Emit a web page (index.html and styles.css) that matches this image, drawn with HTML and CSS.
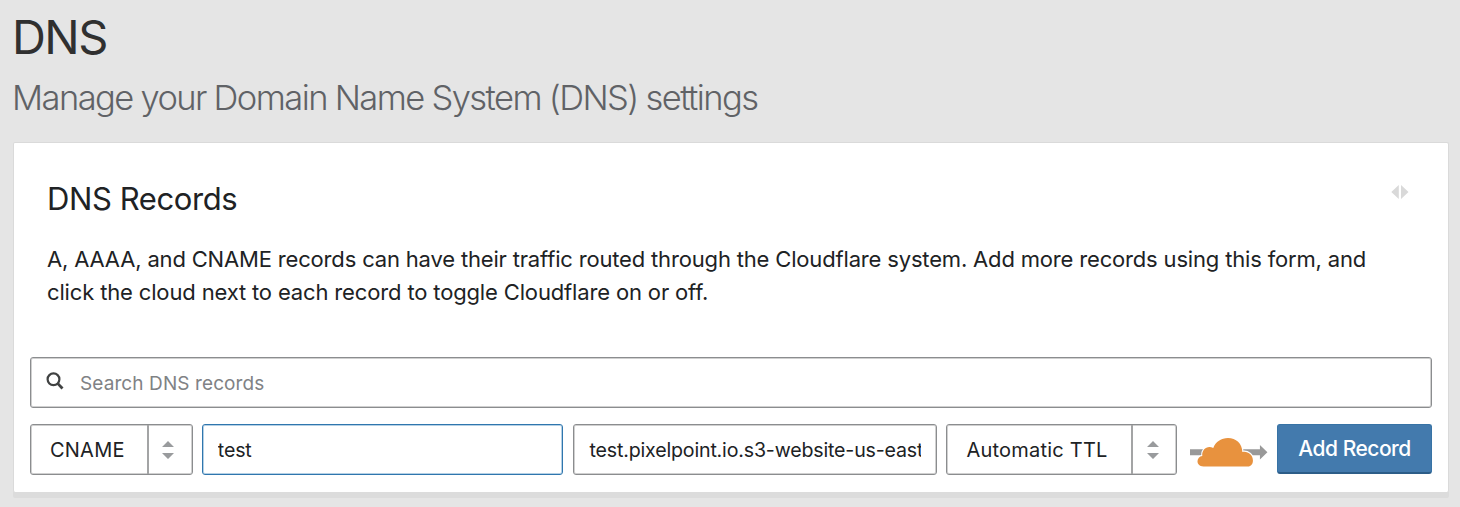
FILE: index.html
```html
<!DOCTYPE html>
<html lang="en">
<head>
<meta charset="utf-8">
<title>DNS</title>
<link rel="stylesheet" href="styles.css">
</head>
<body>
<main class="page">
  <h1 class="page-title"><span>DNS</span></h1>
  <p class="page-subtitle"><span>Manage your Domain Name System (DNS) settings</span></p>
  <section class="card">
    <header class="card-header">
      <h2 class="card-title"><span>DNS Records</span></h2>
      <svg class="expand-icon" width="18" height="16" viewBox="0 0 18 16"><path d="M7.800 1v14L0.300 8zM10 1v14L17.500 8z" fill="#d9d9d9"/></svg>
    </header>
    <p class="card-text"><span>A, AAAA, and CNAME records can have their traffic routed through the Cloudflare system. Add more records using this form, and</span><br><span class="line-two">click the cloud next to each record to toggle Cloudflare on or off.</span></p>
    <div class="search">
      <svg class="search-icon" width="18" height="18" viewBox="0 0 18 18"><g fill="none" stroke="#404242" stroke-width="2.200"><circle cx="7.500" cy="7.300" r="5.900"/><path d="M11.600 11.400L16.500 16.500" stroke-width="2.800"/></g></svg>
      <span class="search-hint">Search DNS records</span>
    </div>
    <div class="record-form">
      <div class="select select-type"><span class="select-value">CNAME</span><span class="select-arrows"><svg width="12" height="18" viewBox="0 0 12 18"><path d="M6 0l6 6H0zM0 12h12l-6 6z" fill="#999b9d"/></svg></span></div>
      <div class="field field-name focused"><span>test</span></div>
      <div class="field field-target"><span>test.pixelpoint.io.s3-website-us-east</span></div>
      <div class="select select-ttl"><span class="select-value">Automatic TTL</span><span class="select-arrows"><svg width="12" height="18" viewBox="0 0 12 18"><path d="M6 0l6 6H0zM0 12h12l-6 6z" fill="#999b9d"/></svg></span></div>
      <svg class="cloud" width="78" height="34" viewBox="0 0 78 34">
        <path d="M0 13.200H70V9L77.500 16.200L70 23.500V19.200H0z" fill="#999"/>
        <path d="M13.500 30.500C9.500 30.500 7.500 28 7.500 25.300C7.500 22.500 9.500 20.200 12.300 19.900C11.500 13.500 17.500 8.800 23.300 12C25.500 5.800 31.500 2 38 2C46 2 52.300 7.600 52.400 15.900C58 14.800 63 19 63 24.500C63 28 61 30.500 58 30.500z" fill="#e8923e" stroke="#fff" stroke-width="2.200" paint-order="stroke"/>
      </svg>
      <button class="add-button" type="button">Add Record</button>
    </div>
  </section>
</main>
</body>
</html>
```
FILE: styles.css
```css
* { box-sizing: border-box; }
body {
  margin: 0;
  background: #e5e5e5;
  color: #202224;
  font-family: Inter, "Liberation Sans", sans-serif;
  overflow: hidden;
}
.page { height: 507px; padding: 7px 11px 0 13px; }
.page-title {
  margin: 0 0 0 -1px;
  height: 60px;
  font-size: 47px;
  line-height: 60px;
  font-weight: 400;
  letter-spacing: -1.6px;
  color: #303030;
}
.page-subtitle {
  margin: 9px 0 0 -1px;
  height: 44px;
  font-size: 34.5px;
  line-height: 44px;
  font-weight: 300;
  letter-spacing: -1.56px;
  word-spacing: -0.4px;
  color: #606266;
}
.card {
  margin-top: 22px;
  height: 350px;
  padding: 34px 16px 0 16px;
  background: #fff;
  border: 1px solid #dadada;
  border-bottom: 0;
  border-radius: 2px;
  box-shadow: 0 6px 0 #dcdcdc;
}
.card-header {
  display: flex;
  justify-content: space-between;
  padding: 0 23px 0 17px;
}
.card-title {
  margin: 0;
  font-size: 31px;
  line-height: 44px;
  font-weight: 400;
  letter-spacing: -0.4px;
}
.expand-icon { margin-top: 7px; }
.card-text {
  margin: 22px 0 0 17px;
  font-size: 22px;
  line-height: 33px;
  letter-spacing: -0.17px;
  white-space: nowrap;
}
.line-two { letter-spacing: -0.15px; }
.search, .select, .field {
  display: flex;
  align-items: center;
  height: 51px;
  border: 1px solid #8b8d8f;
  border-radius: 3px;
  box-shadow: inset 0 0 0 1px #d0d0d0;
  white-space: nowrap;
}
.search {
  margin-top: 48px;
  padding-left: 15px;
  color: #808285;
  font-size: 19px;
  letter-spacing: 0.1px;
}
.search-icon { margin-bottom: 3px; }
.search-hint { margin-left: 16px; padding-top: 1px; }
.record-form {
  display: flex;
  margin-top: 16px;
  font-size: 20px;
}
.select-value { flex: 1; padding-left: 19px; letter-spacing: 0.22px; }
.select-arrows {
  display: flex;
  align-items: center;
  justify-content: center;
  align-self: stretch;
  width: 45px;
  padding: 0 4px 0 0;
  border-left: 2px solid #a3a4a5;
}
.select-type { width: 163px; }
.field { padding: 0 15px; font-size: 19.6px; letter-spacing: -0.17px; }
.field span { overflow: hidden; line-height: 30px; }
.field-name { width: 362px; margin-left: 9px; }
.field-target { width: 364px; margin-left: 10px; }
.focused { border-color: #2f76ae; box-shadow: inset 0 0 0 1px #b4d0e5; }
.select-ttl { width: 231px; margin-left: 9px; }
.cloud { margin: 12px 0 0 13px; }
.add-button {
  width: 155px;
  height: 50px;
  margin-left: 9px;
  padding: 0 0 1px;
  border: 1px solid #3873a5;
  border-bottom: 2px solid #2c5d88;
  border-radius: 3px;
  background: #437aad;
  color: #fff;
  font: 500 21px Inter, "Liberation Sans", sans-serif;
  letter-spacing: -0.5px;
  white-space: nowrap;
}
```
